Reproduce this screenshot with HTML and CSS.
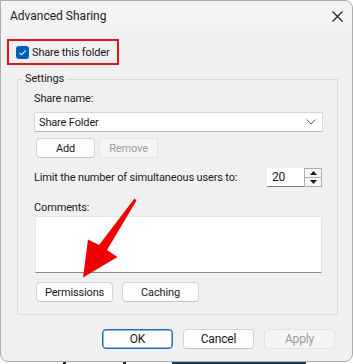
FILE: index.html
```html
<!DOCTYPE html>
<html lang="en">
<head>
    <meta charset="UTF-8">
    <meta name="viewport" content="width=device-width, initial-scale=1.0">
    <title>Advanced Sharing</title>
    <link rel="stylesheet" href="styles.css">
</head>
<body>
    <div class="dialog">
        <header class="titlebar">
            <span class="title">Advanced Sharing</span>
            <span class="close">
                <svg width="11" height="11" viewBox="0 0 11 11"><path d="M0.5 0.5 L10.5 10.5 M10.5 0.5 L0.5 10.5" stroke="#1b1b1b" stroke-width="1.1" fill="none"/></svg>
            </span>
        </header>

        <main class="content">
            <label class="share-check">
                <span class="checkbox">
                    <svg width="13" height="13" viewBox="0 0 13 13"><path d="M3.5 6.8 L5.6 8.8 L9.6 4.4" stroke="#fff" stroke-width="1.1" fill="none"/></svg>
                </span>
                Share this folder
            </label>

            <fieldset class="settings">
                <legend>Settings</legend>

                <div class="field-label">Share name:</div>
                <div class="combo">
                    <span>Share Folder</span>
                    <svg width="10" height="6" viewBox="0 0 10 6"><path d="M0.5 0.5 L5 5 L9.5 0.5" stroke="#5f5f5f" stroke-width="1" fill="none"/></svg>
                </div>
                <div class="btn-row">
                    <button class="btn">Add</button>
                    <button class="btn" disabled>Remove</button>
                </div>

                <div class="limit-row">
                    <span>Limit the number of simultaneous users to:</span>
                    <div class="spin">
                        <span class="spin-value">20</span>
                        <span class="spin-buttons">
                            <span class="spin-up"><svg width="7" height="4" viewBox="0 0 7 4"><path d="M0 4 L3.5 0 L7 4 Z" fill="#1b1b1b"/></svg></span>
                            <span class="spin-down"><svg width="7" height="4" viewBox="0 0 7 4"><path d="M0 0 L3.5 4 L7 0 Z" fill="#1b1b1b"/></svg></span>
                        </span>
                    </div>
                </div>

                <div class="field-label comments-label">Comments:</div>
                <div class="comments"></div>

                <div class="btn-row lower">
                    <button class="btn wide">Permissions</button>
                    <button class="btn wide">Caching</button>
                </div>
            </fieldset>

            <div class="actions">
                <button class="btn action default">OK</button>
                <button class="btn action">Cancel</button>
                <button class="btn action" disabled>Apply</button>
            </div>
        </main>

        <!-- red pointer drawn over the dialog -->
        <svg class="arrow" width="353" height="364" viewBox="0 0 353 364">
            <path d="M134.5 198.5 L136.5 200.5 L107 250 L117.5 257 L83 277.5 L88 239.5 L99 245 Z" fill="#f00000"/>
        </svg>
    </div>

    <div class="desk-strip">
        <span class="mark m1"></span>
        <span class="mark m2"></span>
        <span class="band"></span>
    </div>
</body>
</html>
```

FILE: styles.css
```css
body {
    margin: 0;
    padding: 0;
    background: #ffffff;
    font-family: Roboto, "Noto Sans", sans-serif;
    font-size: 11px;
    letter-spacing: -0.15px;
    color: #1b1b1b;
    width: 353px;
    height: 364px;
    overflow: hidden;
    white-space: nowrap;
}
.dialog {
    position: relative;
    box-sizing: border-box;
    width: 353px;
    height: 362px;
    background: #f0f0f0;
    border: 1px solid #acacac;
    border-radius: 0 8px 8px 8px;
    overflow: hidden;
}
.titlebar {
    height: 30px;
    background: #f3f3f3;
    display: flex;
    align-items: center;
    justify-content: space-between;
    padding: 0 9px 0 9px;
}
.title {
    font-size: 12px;
    letter-spacing: 0;
    line-height: 30px;
}
.close {
    display: flex;
}
.content {
    padding-top: 8px;
}
.share-check {
    box-sizing: border-box;
    display: flex;
    align-items: center;
    gap: 3px;
    width: 112px;
    height: 26px;
    margin-left: 6px;
    padding-left: 7px;
    border: 2px solid #e81123;
}
.checkbox {
    display: flex;
    width: 13px;
    height: 13px;
    border-radius: 3px;
    background: #005fb8;
}
.settings {
    margin: 6px 0 0 16px;
    width: 321px;
    box-sizing: border-box;
    border: 1px solid #dadada;
    padding: 4px 14px 12px 16px;
}
.settings legend {
    padding: 0 2px;
    margin-left: -11px;
    line-height: 16px;
}
.field-label {
    line-height: 16px;
}
.combo {
    box-sizing: border-box;
    height: 20px;
    margin-top: 5px;
    display: flex;
    align-items: center;
    justify-content: space-between;
    padding: 0 6px 0 4px;
    background: #ffffff;
    border: 1px solid #d6d6d6;
    border-bottom-color: #bdbdbd;
    border-radius: 2px;
}
.btn-row {
    display: flex;
    gap: 4px;
    margin: 6px 0 0 2px;
}
.btn {
    box-sizing: border-box;
    width: 59px;
    height: 20px;
    padding: 0;
    font: inherit;
    letter-spacing: inherit;
    color: #1b1b1b;
    background: #fdfdfd;
    border: 1px solid #d3d3d3;
    border-bottom-color: #c2c2c2;
    border-radius: 4px;
}
.btn:disabled {
    color: #9d9d9d;
    background: #f5f5f5;
    border-color: #e4e4e4;
}
.limit-row {
    display: flex;
    align-items: center;
    justify-content: space-between;
    height: 19px;
    margin-top: 10px;
}
.spin {
    display: flex;
    height: 19px;
    margin-right: 1px;
}
.spin-value {
    box-sizing: border-box;
    width: 37px;
    padding-left: 5px;
    font-size: 12px;
    line-height: 18px;
    background: #ffffff;
    border-bottom: 1px solid #7a7a7a;
}
.spin-buttons {
    box-sizing: border-box;
    width: 18px;
    display: flex;
    flex-direction: column;
    border: 1px solid #adadad;
    background: #e8e8e8;
}
.spin-up,
.spin-down {
    flex: 1;
    display: flex;
    align-items: center;
    justify-content: center;
    background: #f7f7f7;
}
.spin-up {
    border-bottom: 1px solid #adadad;
}
.comments-label {
    margin-top: 13px;
}
.comments {
    box-sizing: border-box;
    height: 57px;
    margin: 0 1px;
    background: #ffffff;
    border: 1px solid #e6e6e6;
    border-bottom-color: #8a8a8a;
}
.btn-row.lower {
    gap: 9px;
    margin-top: 9px;
}
.btn.wide {
    width: 77px;
}
.actions {
    display: flex;
    justify-content: flex-end;
    gap: 10px;
    margin: 14px 17px 0 0;
}
.btn.action {
    width: 71px;
    font-size: 12px;
}
.btn.default {
    border: 1px solid #1a6fc4;
    box-shadow: inset 0 0 0 0.5px #1a6fc4;
}
.arrow {
    position: absolute;
    left: -1px;
    top: -1px;
    pointer-events: none;
}
.desk-strip {
    position: relative;
    height: 2px;
}
.mark {
    position: absolute;
    top: 0;
    width: 3px;
    height: 2px;
    background: #2b2b2b;
}
.m1 { left: 63px; }
.m2 { left: 123px; }
.band {
    position: absolute;
    top: 0;
    left: 172px;
    width: 134px;
    height: 2px;
    background: #1d3e5e;
}
```
